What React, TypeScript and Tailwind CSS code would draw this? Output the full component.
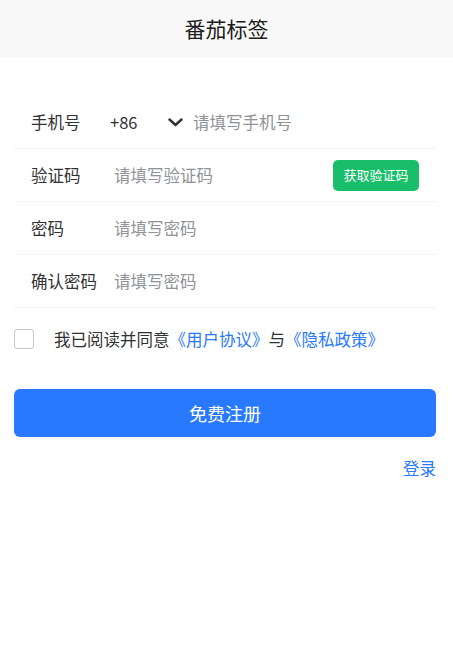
import React from "react";

const font = { fontFamily: '"Noto Sans CJK SC", "Noto Sans", sans-serif' };

function Field({
  label,
  placeholder,
  type = "text",
  children,
}: {
  label: string;
  placeholder: string;
  type?: string;
  children?: React.ReactNode;
}) {
  return (
    <div className="flex h-[53px] items-center border-b border-[#f2f3f5] pl-[17px] pr-[17px]">
      <span className="w-[83px] shrink-0 text-[16.5px] text-[#303133]">{label}</span>
      <input
        type={type}
        placeholder={placeholder}
        className="min-w-0 flex-1 bg-transparent text-[16.5px] text-[#303133] outline-none placeholder:text-[#8f9399]"
      />
      {children}
    </div>
  );
}

export default function App() {
  return (
    <div className="min-h-[656px] w-full bg-white" style={font}>
      <header className="flex h-[57px] items-center justify-center bg-[#f8f8f8]">
        <h1 className="text-[21px] text-[#1a1a1a]">番茄标签</h1>
      </header>

      <form className="ml-[14px] mr-[17px] mt-[39px]">
        <div className="flex h-[53px] items-center border-b border-[#f2f3f5] pl-[17px] pr-[17px]">
          <span className="w-[79px] shrink-0 text-[16.5px] text-[#303133]">手机号</span>
          <span className="w-[58px] shrink-0 text-[16.5px] text-[#303133]">+86</span>
          <svg width="15" height="9" viewBox="0 0 15 9" className="shrink-0">
            <path d="M1.5 1.5 L7.5 7 L13.5 1.5" fill="none" stroke="#303133" strokeWidth="2.4" strokeLinecap="round" strokeLinejoin="round" />
          </svg>
          <input
            type="tel"
            placeholder="请填写手机号"
            className="ml-[10px] min-w-0 flex-1 bg-transparent text-[16.5px] outline-none placeholder:text-[#8f9399]"
          />
        </div>

        <Field label="验证码" placeholder="请填写验证码">
          <button
            type="button"
            className="h-[31px] w-[86px] shrink-0 rounded-[5px] bg-[#19be6b] text-[13px] text-white"
          >
            获取验证码
          </button>
        </Field>
        <Field label="密码" placeholder="请填写密码" type="password" />
        <Field label="确认密码" placeholder="请填写密码" type="password" />

        <label className="mt-[21px] flex h-[20px] items-center">
          <span className="h-[20px] w-[20px] shrink-0 rounded-[3px] border border-[#c8c9cc]" />
          <span className="ml-[20px] text-[16.5px] leading-[20px] text-[#303133]">
            我已阅读并同意<span className="text-[#2979ff]">《用户协议》</span>与
            <span className="text-[#2979ff]">《隐私政策》</span>
          </span>
        </label>

        <button
          type="submit"
          className="mt-[40px] flex h-[48px] w-full items-center justify-center rounded-[6px] bg-[#2979ff] text-[18px] text-white"
        >
          免费注册
        </button>

        <div className="mt-[19px] flex h-[24px] items-center justify-end">
          <a className="text-[16.5px] text-[#2979ff]">登录</a>
        </div>
      </form>
    </div>
  );
}
